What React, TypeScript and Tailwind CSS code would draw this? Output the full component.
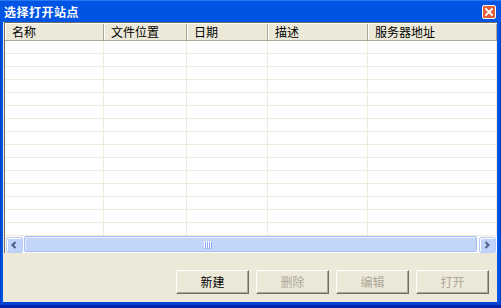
import React from "react";

const cols = [
  { name: "名称", w: 99 },
  { name: "文件位置", w: 83 },
  { name: "日期", w: 81 },
  { name: "描述", w: 100 },
  { name: "服务器地址", w: 0 },
];

const rows = Array.from({ length: 15 });

function Btn({ label, enabled }: { label: string; enabled?: boolean }) {
  return (
    <div
      className={
        "w-[73px] h-[24px] flex items-center justify-center bg-[#ECE9D8] border-t border-l border-t-white border-l-white border-r border-b border-r-[#716F64] border-b-[#716F64] shadow-[inset_-1px_-1px_0_#ACA899] text-[12px] leading-none " +
        (enabled ? "text-black" : "text-[#ACA899]")
      }
    >
      {label}
    </div>
  );
}

export default function App() {
  return (
    <div className="w-[501px] h-[308px] flex flex-col bg-[#0054E3] overflow-hidden font-['Noto_Sans_CJK_SC',sans-serif] select-none">
      {/* title bar */}
      <div className="h-[22px] flex items-center justify-between pl-[4px] pr-[5px] bg-[#0054E3] border-t border-[#2A78F5]">
        <span className="text-white font-bold text-[12px] leading-none tracking-[0.5px]">选择打开站点</span>
        <div className="w-[14px] h-[14px] rounded-[2px] border border-white bg-[#E0603C] flex items-center justify-center">
          <svg width="8" height="8" viewBox="0 0 8 8">
            <path d="M1 1 L7 7 M7 1 L1 7" stroke="white" strokeWidth="1.8" strokeLinecap="square" />
          </svg>
        </div>
      </div>
      {/* body */}
      <div className="flex-1 flex">
        <div className="w-[3px] bg-[#0054E3] border-l border-[#0041C8]" />
        <div className="flex-1 bg-[#ECE9D8] flex flex-col">
          {/* list view */}
          <div className="ml-[1px] flex flex-col border-l border-t border-[#716F64] bg-white">
            <div className="h-[18px] flex bg-[#ECE9D8] border-b border-[#ACA899] border-t border-t-white">
              {cols.map((c, i) => (
                <div
                  key={i}
                  className={
                    "flex items-center pl-[6px] text-[12px] leading-none text-black border-r border-r-[#ACA899] border-l border-l-white " +
                    (c.w ? "" : "flex-1")
                  }
                  style={c.w ? { width: c.w } : undefined}
                >
                  {c.name}
                </div>
              ))}
            </div>
            <div className="flex flex-col">
              {rows.map((_, r) => (
                <div key={r} className="h-[13px] flex border-b border-[#EEEBDC]">
                  {cols.map((c, i) => (
                    <div
                      key={i}
                      className={"border-r border-[#EEEBDC] " + (c.w ? "" : "flex-1")}
                      style={c.w ? { width: c.w } : undefined}
                    />
                  ))}
                </div>
              ))}
            </div>
            {/* horizontal scrollbar */}
            <div className="h-[17px] flex bg-[#FCFCFE] pr-[1px]">
              <div className="w-[17px] h-[16px] m-[0.5px] rounded-[2px] bg-[#C1D3FB] border border-[#B9CCF5] shadow-[inset_1px_1px_0_#fff] flex items-center justify-center">
                <svg width="8" height="8" viewBox="0 0 8 8">
                  <path d="M5.5 1 L2.5 4 L5.5 7" stroke="#4D6185" strokeWidth="2" fill="none" />
                </svg>
              </div>
              <div className="flex-1 h-[16px] mx-[1px] rounded-[2px] bg-[#C4D5FC] border border-[#A9C0F3] shadow-[inset_1px_1px_0_#E4ECFE] flex items-center">
                <div className="ml-[179px] flex gap-[1px]">
                  {[0, 1, 2, 3].map((k) => (
                    <div key={k} className="w-[1px] h-[7px] bg-white shadow-[1px_1px_0_#8DAEF2]" />
                  ))}
                </div>
              </div>
              <div className="w-[17px] h-[16px] m-[0.5px] rounded-[2px] bg-[#C1D3FB] border border-[#B9CCF5] shadow-[inset_1px_1px_0_#fff] flex items-center justify-center">
                <svg width="8" height="8" viewBox="0 0 8 8">
                  <path d="M2.5 1 L5.5 4 L2.5 7" stroke="#4D6185" strokeWidth="2" fill="none" />
                </svg>
              </div>
            </div>
          </div>
          <div className="flex-1 flex items-end justify-end gap-[7px] pr-[8px] pb-[8px]">
            <Btn label="新建" enabled />
            <Btn label="删除" />
            <Btn label="编辑" />
            <Btn label="打开" />
          </div>
        </div>
        <div className="w-[4px] bg-[#0054E3] border-r border-[#0041C8]" />
      </div>
      <div className="h-[6px] bg-[#0046D5] border-b-[3px] border-[#0022A8]" />
    </div>
  );
}
